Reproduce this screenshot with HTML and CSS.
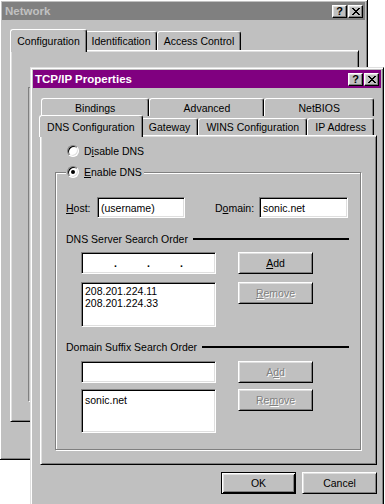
FILE: index.html
```html
<!DOCTYPE html>
<html lang="en">
<head>
    <meta charset="UTF-8">
    <meta name="viewport" content="width=device-width, initial-scale=1.0">
    <title>TCP/IP Properties</title>
    <link rel="stylesheet" href="styles.css">
</head>
<body>
    <div class="window network-window">
        <div class="title-bar inactive">
            <span class="title-text">Network</span>
            <div class="title-buttons">
                <span class="cap-btn">?</span>
                <span class="cap-btn">
                    <svg width="8" height="7" viewBox="0 0 8 7" shape-rendering="crispEdges"><path d="M0 0h2v1H0zM6 0h2v1H6zM1 1h2v1H1zM5 1h2v1H5zM2 2h4v1H2zM3 3h2v1H3zM2 4h4v1H2zM1 5h2v1H1zM5 5h2v1H5zM0 6h2v1H0zM6 6h2v1H6z" fill="#000"/></svg>
                </span>
            </div>
        </div>
        <div class="network-body">
            <div class="tab-row network-tabs">
                <div class="tab selected tab-config">Configuration</div>
                <div class="tab tab-ident">Identification</div>
                <div class="tab tab-access">Access Control</div>
            </div>
            <div class="tab-panel network-panel">
                <div class="component-list"></div>
            </div>
        </div>
    </div>

    <div class="window tcp-window">
        <div class="title-bar">
            <span class="title-text">TCP/IP Properties</span>
            <div class="title-buttons">
                <span class="cap-btn">?</span>
                <span class="cap-btn">
                    <svg width="8" height="7" viewBox="0 0 8 7" shape-rendering="crispEdges"><path d="M0 0h2v1H0zM6 0h2v1H6zM1 1h2v1H1zM5 1h2v1H5zM2 2h4v1H2zM3 3h2v1H3zM2 4h4v1H2zM1 5h2v1H1zM5 5h2v1H5zM0 6h2v1H0zM6 6h2v1H6z" fill="#000"/></svg>
                </span>
            </div>
        </div>
        <div class="tcp-body">
            <div class="tab-rows">
                <div class="tab-row back-row">
                    <div class="tab">Bindings</div>
                    <div class="tab">Advanced</div>
                    <div class="tab">NetBIOS</div>
                </div>
                <div class="tab-row front-row">
                    <div class="tab selected">DNS Configuration</div>
                    <div class="tab">Gateway</div>
                    <div class="tab">WINS Configuration</div>
                    <div class="tab">IP Address</div>
                </div>
            </div>
            <div class="tab-panel dns-panel">
                <div class="radio-line disable-line"><span class="radio"></span>D<u>i</u>sable DNS</div>
                <div class="group">
                    <div class="radio-line group-legend"><span class="radio checked"></span><u>E</u>nable DNS</div>
                    <div class="host-row">
                        <span class="host-label"><u>H</u>ost:</span>
                        <div class="text-field host-field">(username)</div>
                        <span class="domain-label">D<u>o</u>main:</span>
                        <div class="text-field domain-field">sonic.net</div>
                    </div>

                    <div class="section-head server-head">
                        <span>DNS Server Search Order</span>
                        <span class="rule"></span>
                    </div>
                    <div class="order-block server-block">
                        <div class="order-fields">
                            <div class="text-field ip-field">
                                <span class="seg"></span><span class="dot">.</span>
                                <span class="seg"></span><span class="dot">.</span>
                                <span class="seg"></span><span class="dot">.</span>
                                <span class="seg"></span>
                            </div>
                            <div class="text-field list-box">
                                <div>208.201.224.11</div>
                                <div>208.201.224.33</div>
                            </div>
                        </div>
                        <div class="order-buttons">
                            <button class="btn"><u>A</u>dd</button>
                            <button class="btn" disabled><u>R</u>emove</button>
                        </div>
                    </div>

                    <div class="section-head suffix-head">
                        <span>Domain Suffix Search Order</span>
                        <span class="rule"></span>
                    </div>
                    <div class="order-block suffix-block">
                        <div class="order-fields">
                            <div class="text-field suffix-field"></div>
                            <div class="text-field list-box">
                                <div>sonic.net</div>
                            </div>
                        </div>
                        <div class="order-buttons">
                            <button class="btn" disabled>A<u>d</u>d</button>
                            <button class="btn" disabled>Re<u>m</u>ove</button>
                        </div>
                    </div>
                </div>
            </div>
            <div class="dialog-buttons">
                <button class="btn default">OK</button>
                <button class="btn">Cancel</button>
            </div>
        </div>
    </div>
</body>
</html>
```

FILE: styles.css
```css
* {
    box-sizing: border-box;
}

body {
    margin: 0;
    width: 385px;
    height: 504px;
    overflow: hidden;
    position: relative;
    background: #fff;
    font-family: "Liberation Sans", Arial, sans-serif;
    font-size: 10.5px;
    color: #000;
}

u {
    text-decoration: underline;
}

/* windows */

.window {
    position: absolute;
    display: flex;
    flex-direction: column;
    background: #c0c0c0;
    border: 1px solid;
    border-color: #dfdfdf #000 #000 #dfdfdf;
    box-shadow: inset 1px 1px #fff, inset -1px -1px #808080;
    padding: 2px;
}

.network-window {
    z-index: 1;
    left: -1px;
    top: -1px;
    width: 369px;
    height: 461px;
}

.tcp-window {
    z-index: 2;
    left: 30px;
    top: 67px;
    width: 354px;
    height: 440px;
}

.title-bar {
    height: 18px;
    flex: none;
    display: flex;
    align-items: center;
    justify-content: space-between;
    padding: 0 2px;
    background: #800080;
    color: #fff;
    font-weight: bold;
    font-size: 11.5px;
}

.title-bar.inactive {
    background: #808080;
    color: #c0c0c0;
    padding-left: 3px;
}

.title-buttons {
    display: flex;
    gap: 1px;
}

.cap-btn {
    width: 15px;
    height: 13px;
    display: flex;
    align-items: center;
    justify-content: center;
    background: #c0c0c0;
    color: #000;
    font-size: 11px;
    font-weight: bold;
    border: 1px solid;
    border-color: #fff #000 #000 #fff;
    box-shadow: inset -1px -1px #808080, inset 1px 1px #dfdfdf;
}

/* tabs */

.tab-row {
    display: flex;
}

.tab {
    flex: 1 1 auto;
    display: flex;
    align-items: center;
    justify-content: center;
    padding: 0 5px;
    background: #c0c0c0;
    border: 1px solid #fff;
    border-bottom: none;
    border-right-color: #000;
    border-radius: 3px 3px 0 0;
    box-shadow: inset -1px 0 #808080;
    white-space: nowrap;
}

.tab.selected {
    position: relative;
    z-index: 2;
    margin: 0 -2px -2px;
}

.tab-panel {
    position: relative;
    z-index: 1;
    background: #c0c0c0;
    border: 1px solid;
    border-color: #fff #000 #000 #fff;
    box-shadow: inset 1px 1px #dfdfdf, inset -1px -1px #808080;
}

/* network dialog behind */

.network-body {
    flex: 1;
    display: flex;
    flex-direction: column;
    padding: 9px 6px 35px 8px;
}

.network-tabs {
    height: 21px;
    align-items: flex-end;
    padding-left: 2px;
}

.network-tabs .tab {
    flex: none;
    height: 19px;
    padding: 0;
}

.network-tabs .tab.selected {
    height: 23px;
}

.tab-config {
    width: 77px;
}

.tab-ident {
    width: 72px;
}

.tab-access {
    width: 84px;
}

.network-panel {
    flex: 1;
}

.component-list {
    width: 320px;
    height: 315px;
    margin: 36px 0 0 17px;
    border: 1px solid;
    border-color: #808080 #fff #fff #808080;
}

/* tcp/ip dialog */

.tcp-body {
    flex: 1;
    display: flex;
    flex-direction: column;
    padding: 10px 4px 0 7px;
}

.tab-rows {
    padding: 0 3px 0 1px;
}

.back-row {
    height: 18px;
}

.back-row .tab {
    height: 18px;
}

.front-row {
    height: 19px;
    align-items: flex-end;
}

.front-row .tab {
    height: 17px;
}

.front-row .tab.selected {
    height: 22px;
}

.dns-panel {
    height: 330px;
    padding: 8px 15px 0 14px;
}

.radio-line {
    display: flex;
    align-items: center;
    height: 14px;
    white-space: nowrap;
}

.radio {
    width: 12px;
    height: 12px;
    margin-right: 5px;
    border-radius: 50%;
    background: #fff;
    border: 1px solid;
    border-color: #808080 #fff #fff #808080;
    box-shadow: inset 1px 1px #000, inset -1px -1px #dfdfdf;
    display: flex;
    align-items: center;
    justify-content: center;
}

.radio.checked::after {
    content: "";
    width: 4px;
    height: 4px;
    border-radius: 50%;
    background: #000;
}

.disable-line {
    margin-left: 12px;
}

.group {
    position: relative;
    margin-top: 14px;
    height: 278px;
    border: 1px solid #808080;
    box-shadow: inset 1px 1px #fff, 1px 1px #fff;
    padding: 24px 10px 0 10px;
}

.group-legend {
    position: absolute;
    top: -8px;
    left: 10px;
    padding: 0 2px 0 1px;
    background: #c0c0c0;
}

.text-field {
    background: #fff;
    border: 1px solid;
    border-color: #808080 #fff #fff #808080;
    box-shadow: inset 1px 1px #000, inset -1px -1px #dfdfdf;
    display: flex;
    align-items: center;
    padding: 0 3px;
    white-space: nowrap;
}

.host-row {
    display: flex;
    align-items: center;
    height: 21px;
}

.host-label {
    width: 31px;
}

.host-field {
    width: 88px;
    height: 21px;
}

.domain-label {
    width: 44px;
    margin-left: 30px;
}

.domain-field {
    width: 89px;
    height: 21px;
}

.section-head {
    display: flex;
    align-items: center;
    height: 13px;
    white-space: nowrap;
}

.server-head {
    margin-top: 14px;
}

.suffix-head {
    margin-top: 13px;
}

.rule {
    flex: 1;
    height: 2px;
    margin: 1px 1px 0 5px;
    background: #000;
}

.order-block {
    display: flex;
    gap: 22px;
    padding-left: 15px;
}

.server-block {
    margin-top: 7px;
}

.suffix-block {
    margin-top: 8px;
}

.order-fields,
.order-buttons {
    display: flex;
    flex-direction: column;
    gap: 8px;
}

.suffix-block .order-fields,
.suffix-block .order-buttons {
    gap: 6px;
}

.order-fields {
    width: 135px;
}

.order-buttons {
    width: 75px;
}

.ip-field {
    height: 22px;
    padding: 0 2px;
}

.ip-field .seg {
    flex: 1;
}

.ip-field .dot {
    width: 3px;
    text-align: center;
    font-weight: bold;
}

.suffix-field {
    height: 22px;
}

.list-box {
    display: block;
    padding: 2px 3px;
    line-height: 12px;
}

.server-block .list-box {
    height: 45px;
}

.suffix-block .list-box {
    height: 44px;
    padding-top: 4px;
}

.btn {
    width: 75px;
    height: 22px;
    padding: 0;
    font-family: inherit;
    font-size: 10.5px;
    color: #000;
    background: #c0c0c0;
    border: 1px solid;
    border-color: #fff #000 #000 #fff;
    box-shadow: inset 1px 1px #dfdfdf, inset -1px -1px #808080;
}

.btn:disabled {
    color: #808080;
    text-shadow: 1px 1px 0 #fff;
}

.btn.default {
    border: 1px solid #000;
    box-shadow: inset 1px 1px #fff, inset -1px -1px #000, inset 2px 2px #dfdfdf, inset -2px -2px #808080;
}

.dialog-buttons {
    display: flex;
    justify-content: flex-end;
    gap: 6px;
    margin-top: 7px;
}
```
